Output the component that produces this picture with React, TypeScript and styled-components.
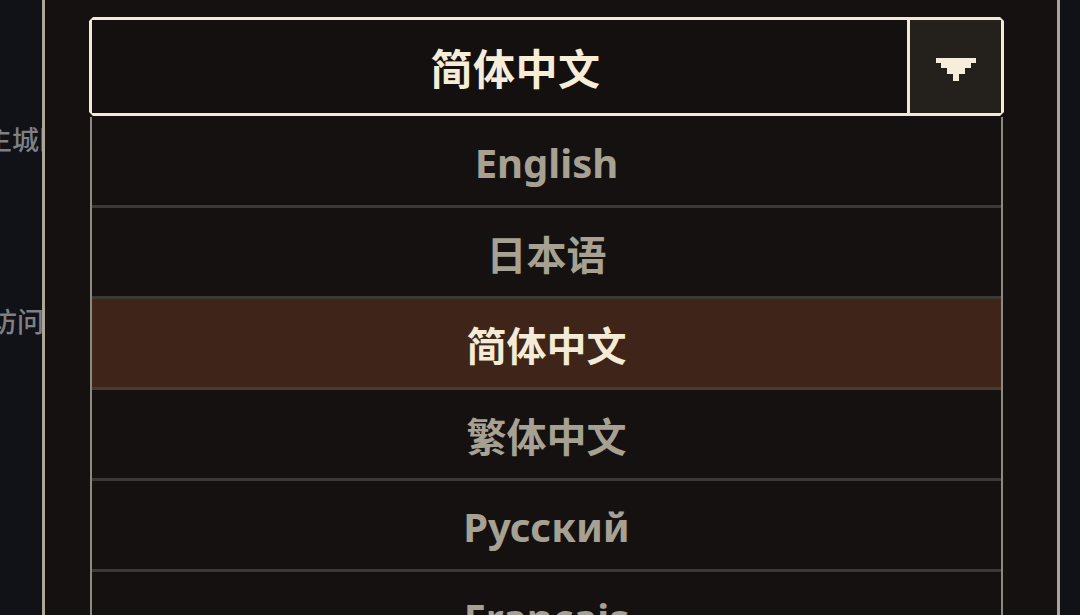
import styled, { createGlobalStyle } from 'styled-components';

const GlobalStyle = createGlobalStyle`
  html, body {
    margin: 0;
    padding: 0;
    background: #0f1116;
    overflow: hidden;
  }
  * {
    box-sizing: border-box;
  }
`;

const Page = styled.div`
  display: flex;
  width: 1080px;
  height: 615px;
  background: #0f1116;
  font-family: "Noto Sans", "Noto Sans CJK SC", sans-serif;
  overflow: hidden;
`;

const Backdrop = styled.div<{ $width: number }>`
  width: ${(p) => p.$width}px;
  flex: none;
  overflow: hidden;
  display: flex;
  flex-direction: column;
  background: #101217;
`;

const MapLabel = styled.div<{ $top: number; $shift: number }>`
  margin-top: ${(p) => p.$top}px;
  margin-right: ${(p) => p.$shift}px;
  align-self: flex-end;
  white-space: nowrap;
  font-family: "Noto Sans CJK SC", sans-serif;
  font-size: 27px;
  font-weight: 500;
  line-height: 30px;
  color: #7e8085;
`;

const Panel = styled.div`
  flex: 1;
  display: flex;
  flex-direction: column;
  overflow: hidden;
  background: #141110;
  border-left: 3px solid #aca697;
  border-right: 3px solid #aca697;
  padding: 17px 53px 0 44px;
`;

const SelectFrame = styled.div`
  flex: none;
  height: 99px;
  padding: 3px;
  background: #f3ead6;
  clip-path: polygon(
    4px 0, calc(100% - 4px) 0, 100% 4px, 100% calc(100% - 4px),
    calc(100% - 4px) 100%, 4px 100%, 0 calc(100% - 4px), 0 4px
  );
  display: flex;
  gap: 3px;
`;

const SelectLabel = styled.div`
  flex: 1;
  display: flex;
  align-items: center;
  justify-content: center;
  padding-left: 32px;
  background: #141010;
  color: #f6edd8;
  font-family: "Noto Sans CJK SC", sans-serif;
  font-size: 42px;
  font-weight: 700;
  letter-spacing: 0.5px;
`;

const ArrowBox = styled.div`
  width: 91px;
  display: flex;
  align-items: center;
  justify-content: center;
  padding-top: 6px;
  background: #24211d;
`;

const List = styled.div`
  flex: none;
  margin: 1px 1px 0 1px;
  border-left: 2px solid #8d897f;
  border-right: 2px solid #8d897f;
  background: #151110;
  display: flex;
  flex-direction: column;
`;

const Option = styled.div<{ $active?: boolean }>`
  height: 91px;
  flex: none;
  display: flex;
  align-items: center;
  justify-content: center;
  border-bottom: 3px solid ${(p) => (p.$active ? '#4a3a31' : '#3b3835')};
  background: ${(p) => (p.$active ? '#3e2419' : 'transparent')};
  color: ${(p) => (p.$active ? '#f4ebd6' : '#a6a193')};
  font-family: "Noto Sans", "Noto Sans CJK SC", sans-serif;
  font-size: 40px;
  font-weight: 700;
  padding-top: 2px;
`;

const languages = ['English', '日本语', '简体中文', '繁体中文', 'Русский', 'Français'];

function ArrowIcon() {
  return (
    <svg width="40" height="23" viewBox="0 0 40 23">
      <path
        d="M0 0 H40 V5 H35 V10 H29 V16 H23 V23 H17 V16 H11 V10 H5 V5 H0 Z"
        fill="#f6eddb"
      />
    </svg>
  );
}

export default function App() {
  const current = '简体中文';
  return (
    <>
      <GlobalStyle />
      <Page>
        <Backdrop $width={42}>
          <MapLabel $top={124} $shift={-24}>主城区</MapLabel>
          <MapLabel $top={152} $shift={-2}>可访问</MapLabel>
        </Backdrop>
        <Panel>
          <SelectFrame>
            <SelectLabel>{current}</SelectLabel>
            <ArrowBox>
              <ArrowIcon />
            </ArrowBox>
          </SelectFrame>
          <List>
            {languages.map((lang) => (
              <Option key={lang} $active={lang === current}>
                {lang}
              </Option>
            ))}
          </List>
        </Panel>
        <Backdrop $width={20} />
      </Page>
    </>
  );
}
